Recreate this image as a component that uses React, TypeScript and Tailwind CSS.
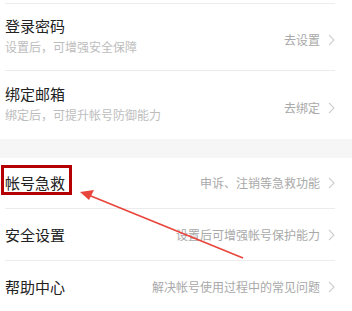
import React from 'react';

interface Row {
  title: string;
  sub?: string;
  action: string;
  height: string;
  border: boolean;
}

const topRows: Row[] = [
  { title: '登录密码', sub: '设置后，可增强安全保障', action: '去设置', height: 'h-[67px]', border: true },
  { title: '绑定邮箱', sub: '绑定后，可提升帐号防御能力', action: '去绑定', height: 'h-[68px]', border: false },
];

const bottomRows: Row[] = [
  { title: '帐号急救', action: '申诉、注销等急救功能', height: 'h-[51px]', border: true },
  { title: '安全设置', action: '设置后可增强帐号保护能力', height: 'h-[52px]', border: true },
  { title: '帮助中心', action: '解决帐号使用过程中的常见问题', height: 'h-[51px]', border: false },
];

function Chevron() {
  return (
    <svg width="7" height="12" viewBox="0 0 7 12" className="ml-[8px] shrink-0">
      <polyline points="1,1 6,6 1,11" fill="none" stroke="#cfcfcf" strokeWidth="1.1" />
    </svg>
  );
}

function SettingRow({ row }: { row: Row }) {
  return (
    <div className={`flex items-center ${row.height} ${row.border ? 'border-b border-[#ececec]' : ''}`}>
      <div className="flex-1 min-w-0">
        <div className={`text-[15px] leading-[20px] text-[#222] ${row.sub ? '-mt-[4px]' : ''}`}>{row.title}</div>
        {row.sub && <div className="mt-[3px] text-[12px] leading-[16px] text-[#bdbdbd]">{row.sub}</div>}
      </div>
      <div className={`flex items-center text-[12px] text-[#a9a9a9] ${row.sub ? 'mt-[6px]' : ''}`}>
        <span>{row.action}</span>
        <Chevron />
      </div>
    </div>
  );
}

export default function App() {
  return (
    <div
      className="relative w-[352px] h-[311px] overflow-hidden bg-white pt-[3px]"
      style={{ fontFamily: '"Noto Sans CJK SC", "Noto Sans", sans-serif' }}
    >
      {/* Account section */}
      <div className="ml-[5px] mr-[17px] border-t border-[#ececec]">
        {topRows.map((row) => (
          <SettingRow key={row.title} row={row} />
        ))}
      </div>

      <div className="h-[19px] bg-[#f6f6f6]" />

      {/* Help section */}
      <div className="ml-[5px] mr-[17px]">
        {bottomRows.map((row) => (
          <SettingRow key={row.title} row={row} />
        ))}
      </div>

      {/* annotation box */}
      <div className="absolute left-[1px] top-[165px] w-[71px] h-[30px] border-[3px] border-[#b40000]" />

      {/* annotation arrow */}
      <svg className="absolute left-0 top-0" width="352" height="311" viewBox="0 0 352 311">
        <line x1="243" y1="258" x2="86" y2="194" stroke="#e8453c" strokeWidth="1.6" />
        <polygon points="80,192 94,190 89,200" fill="#e8453c" />
      </svg>
    </div>
  );
}
